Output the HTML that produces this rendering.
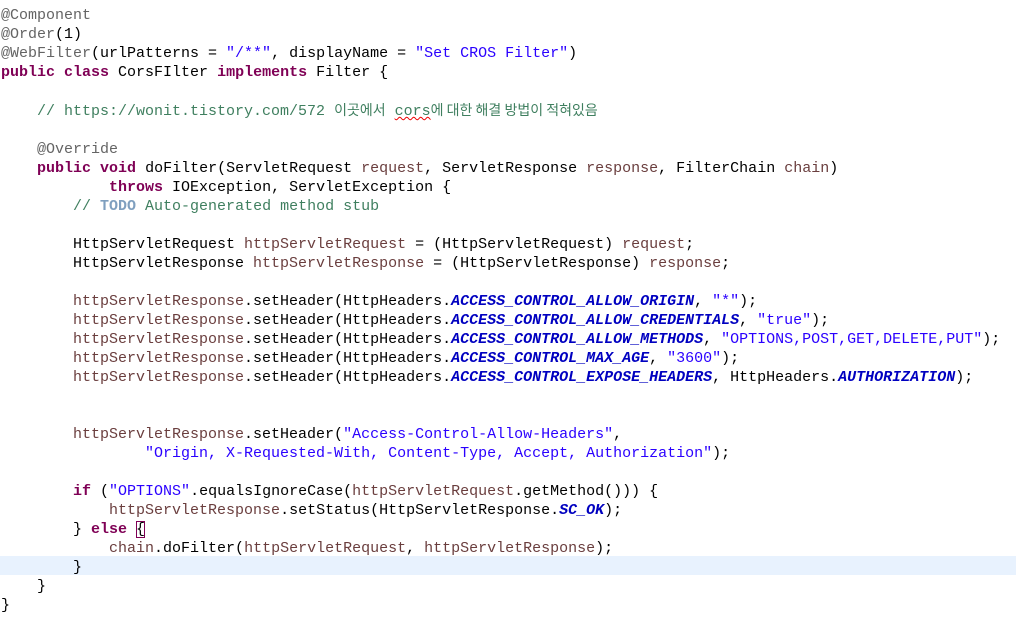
<!DOCTYPE html>
<html><head><meta charset="utf-8"><style>
html,body{margin:0;padding:0;background:#fff;width:1016px;height:628px;overflow:hidden}
pre{margin:0;position:absolute;left:1px;top:6px;font-family:"Liberation Mono","Noto Sans CJK KR",monospace;font-size:15px;line-height:19px;color:#000}
.hl{position:absolute;left:0;top:556px;width:1016px;height:19px;background:#e8f2fe}
.a{color:#646464}.k{color:#7f0055;font-weight:bold}.s{color:#2a00ff}.c{color:#3f7f5f}
.f{color:#0000c0;font-weight:bold;font-style:italic}.v{color:#6a3e3e}.t{color:#7f9fbf;font-weight:bold}
.kr{font-family:"Noto Sans CJK KR",sans-serif;font-size:14px}
.u{text-decoration:underline wavy #e00;text-decoration-thickness:1px}
.b{outline:1px solid #7f0055;outline-offset:-1px}
</style></head><body>
<div class="hl"></div>
<pre><span class="a">@Component</span>
<span class="a">@Order</span>(1)
<span class="a">@WebFilter</span>(urlPatterns = <span class="s">"/**"</span>, displayName = <span class="s">"Set CROS Filter"</span>)
<span class="k">public</span> <span class="k">class</span> CorsFIlter <span class="k">implements</span> Filter {

    <span class="c">// https://wonit.tistory.com/572 <span class="kr">이곳에서</span> <span class="u">cors</span><span class="kr">에 대한 해결 방법이 적혀있음</span></span>

    <span class="a">@Override</span>
    <span class="k">public</span> <span class="k">void</span> doFilter(ServletRequest <span class="v">request</span>, ServletResponse <span class="v">response</span>, FilterChain <span class="v">chain</span>)
            <span class="k">throws</span> IOException, ServletException {
        <span class="c">// <span class="t">TODO</span> Auto-generated method stub</span>

        HttpServletRequest <span class="v">httpServletRequest</span> = (HttpServletRequest) <span class="v">request</span>;
        HttpServletResponse <span class="v">httpServletResponse</span> = (HttpServletResponse) <span class="v">response</span>;

        <span class="v">httpServletResponse</span>.setHeader(HttpHeaders.<span class="f">ACCESS_CONTROL_ALLOW_ORIGIN</span>, <span class="s">"*"</span>);
        <span class="v">httpServletResponse</span>.setHeader(HttpHeaders.<span class="f">ACCESS_CONTROL_ALLOW_CREDENTIALS</span>, <span class="s">"true"</span>);
        <span class="v">httpServletResponse</span>.setHeader(HttpHeaders.<span class="f">ACCESS_CONTROL_ALLOW_METHODS</span>, <span class="s">"OPTIONS,POST,GET,DELETE,PUT"</span>);
        <span class="v">httpServletResponse</span>.setHeader(HttpHeaders.<span class="f">ACCESS_CONTROL_MAX_AGE</span>, <span class="s">"3600"</span>);
        <span class="v">httpServletResponse</span>.setHeader(HttpHeaders.<span class="f">ACCESS_CONTROL_EXPOSE_HEADERS</span>, HttpHeaders.<span class="f">AUTHORIZATION</span>);


        <span class="v">httpServletResponse</span>.setHeader(<span class="s">"Access-Control-Allow-Headers"</span>,
                <span class="s">"Origin, X-Requested-With, Content-Type, Accept, Authorization"</span>);

        <span class="k">if</span> (<span class="s">"OPTIONS"</span>.equalsIgnoreCase(<span class="v">httpServletRequest</span>.getMethod())) {
            <span class="v">httpServletResponse</span>.setStatus(HttpServletResponse.<span class="f">SC_OK</span>);
        } <span class="k">else</span> <span class="b">{</span>
            <span class="v">chain</span>.doFilter(<span class="v">httpServletRequest</span>, <span class="v">httpServletResponse</span>);
        }
    }
}</pre>
</body></html>
